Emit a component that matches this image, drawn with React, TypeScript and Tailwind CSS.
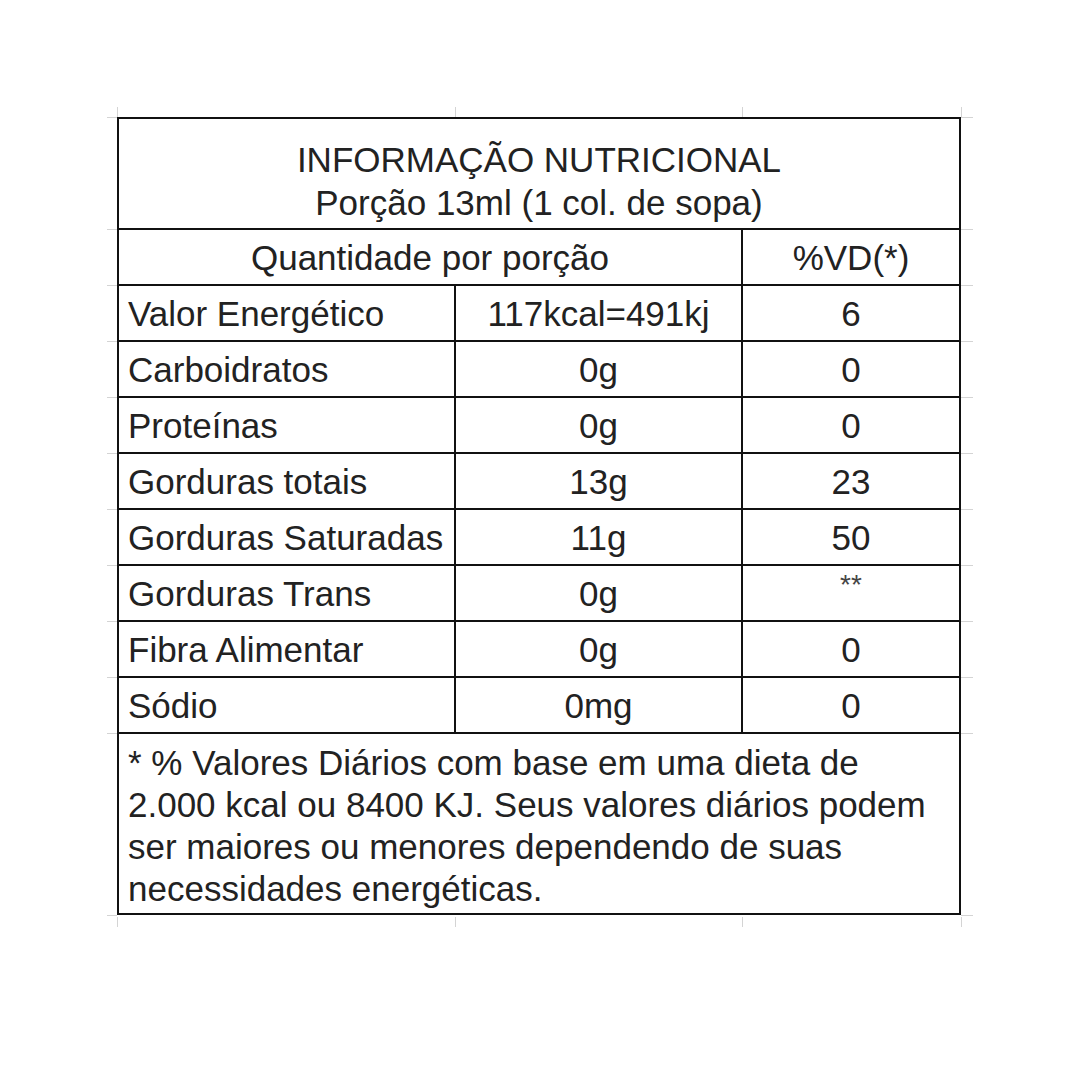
const rows = [
  { label: "Valor Energético", value: "117kcal=491kj", vd: "6" },
  { label: "Carboidratos", value: "0g", vd: "0" },
  { label: "Proteínas", value: "0g", vd: "0" },
  { label: "Gorduras totais", value: "13g", vd: "23" },
  { label: "Gorduras Saturadas", value: "11g", vd: "50" },
  { label: "Gorduras Trans", value: "0g", vd: "**" },
  { label: "Fibra Alimentar", value: "0g", vd: "0" },
  { label: "Sódio", value: "0mg", vd: "0" },
];

// faint spreadsheet gridline stubs sticking out of the table
const lineYs = [0, 112, 168, 224, 280, 336, 392, 448, 504, 560, 616, 798];
const lineXs = [0, 338, 625, 844];

const Stubs = () => (
  <>
    {lineYs.map((y) => (
      <div key={"l" + y}>
        <div className="absolute h-px w-[10px] bg-[#d4d4d4]" style={{ top: y, left: -10 }} />
        <div className="absolute h-px w-[12px] bg-[#d4d4d4]" style={{ top: y, left: 844 }} />
      </div>
    ))}
    {lineXs.map((x) => (
      <div key={"c" + x}>
        <div className="absolute w-px h-[10px] bg-[#d4d4d4]" style={{ left: x, top: -10 }} />
        <div className="absolute w-px h-[10px] bg-[#d4d4d4]" style={{ left: x, top: 800 }} />
      </div>
    ))}
  </>
);

export default function App() {
  return (
    <div
      className="w-[1080px] h-[1080px] bg-white pt-[117px] pl-[117px] text-[#222]"
      style={{ fontFamily: '"Liberation Sans", Arial, sans-serif' }}
    >
      <div className="relative w-[844px]">
        <Stubs />
        <div className="relative w-[844px] border-2 border-[#111] bg-white text-[35px] leading-none">
          {/* Title */}
          <div className="h-[111px] pt-[14px] border-b-2 border-[#111] flex flex-col items-center justify-center leading-[43px]">
            <div>INFORMAÇÃO NUTRICIONAL</div>
            <div>Porção 13ml (1 col. de sopa)</div>
          </div>

          {/* Header */}
          <div className="h-[56px] border-b-2 border-[#111] flex">
            <div className="w-[624px] border-r-2 border-[#111] flex items-center justify-center">
              Quantidade por porção
            </div>
            <div className="flex-1 flex items-center justify-center">%VD(*)</div>
          </div>

          {/* Nutrients */}
          {rows.map((r) => (
            <div key={r.label} className="h-[56px] border-b-2 border-[#111] flex">
              <div className="w-[337px] border-r-2 border-[#111] flex items-center pl-[9px] whitespace-nowrap">
                {r.label}
              </div>
              <div className="w-[287px] border-r-2 border-[#111] flex items-center justify-center">
                {r.value}
              </div>
              <div className="flex-1 flex items-center justify-center">
                {r.vd === "**" ? (
                  <span className="text-[28px] text-[#444] -mt-[16px]">**</span>
                ) : (
                  r.vd
                )}
              </div>
            </div>
          ))}

          {/* Footnote */}
          <div className="h-[179px] pl-[9px] pr-[9px] pt-[8px] leading-[42px]">
            * % Valores Diários com base em uma dieta de
            <br />
            2.000 kcal ou 8400 KJ. Seus valores diários podem
            <br />
            ser maiores ou menores dependendo de suas
            <br />
            necessidades energéticas.
          </div>
        </div>
      </div>
    </div>
  );
}
